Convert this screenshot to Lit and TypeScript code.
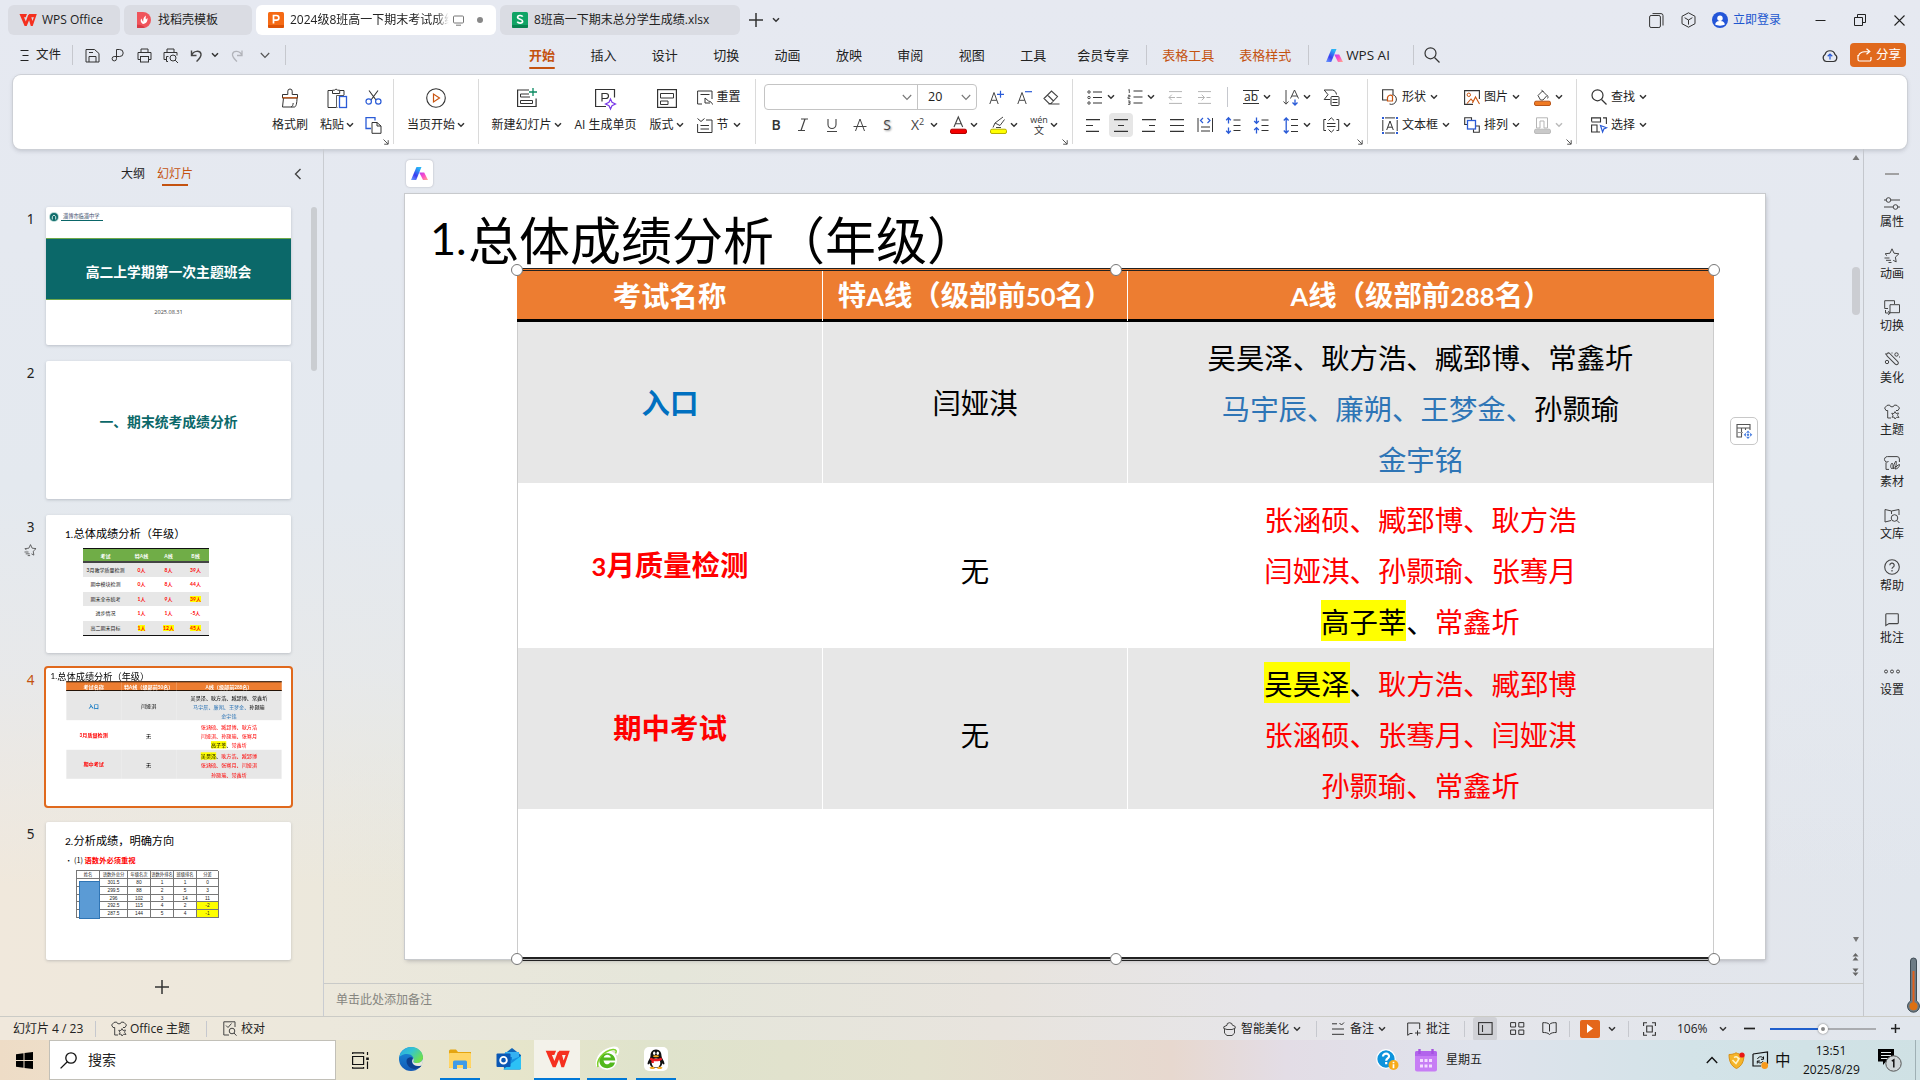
import { LitElement, html, css, svg, nothing } from "lit";
import { customElement } from "lit/decorators.js";
import { classMap } from "lit/directives/class-map.js";

const D = "#333";
const B = "#2a5bd7";
const O = "#c9540f";

/* ---------- icon set: [width, height, drawing] ---------- */
const ICONS: Record<string, [number, number, unknown]> = {
  caret: [8, 6, svg`<path d="M1 1.2 4 4.2 7 1.2" stroke=${D} stroke-width="1.5"/>`],
  caretGray: [8, 6, svg`<path d="M1 1.2 4 4.2 7 1.2" stroke="#bbb" stroke-width="1.5"/>`],
  chevDown: [10, 7, svg`<path d="M.8 1 5 5.4 9.2 1" stroke="#555" stroke-width="1.2"/>`],
  chevDownLight: [10, 7, svg`<path d="M.8 1 5 5.4 9.2 1" stroke="#777" stroke-width="1.1"/>`],
  chevLeft: [8, 12, svg`<path d="M6.5 1 1.5 6l5 5" stroke="#444" stroke-width="1.4"/>`],
  launcher: [6, 6, svg`<path d="M.5.5 5 5M5.2 1.2v4H1.2" stroke="#555"/>`],
  wps: [18, 14, svg`<path d="M.5 1H8L6.700 4.200H5L6.800 8.500 9.300 1.800h2.300L13.400 8l1.500-3.800H9.200L10.200 1H17.800L13.700 13h-1.900L10.100 7.200 7.700 13H5.600Z" fill="#f5301f"/>`],
  docer: [14, 16, svg`<path d="M0 0h6a8 8 0 0 1 0 16H0Z" fill="#f0545b"/><path d="M0 12.5c3 .6 5 .2 8 2.9L6 16H0Z" fill="#d93b45"/><path d="M6 12C3 10 3.6 7.6 4.4 6.4 5 8 5.400 9 6.300 10 6 6 7.400 4.500 9 3.500c-.4 2-.4 3.200 0 4l1.400-1.500C11 9 9.400 11.400 6 12Z" fill="#fff"/>`],
  ppt: [16, 16, svg`<rect width="16" height="16" rx="1.500" fill="#f56a14"/><path d="M0 13h16v1.500a1.500 1.500 0 0 1-1.500 1.500h-13A1.500 1.500 0 0 1 0 14.500Z" fill="#dc5206"/><path d="M5.500 11.500v-8h3a2.300 2.300 0 0 1 0 4.700h-3" stroke="#fff" stroke-width="1.700"/>`],
  xls: [16, 16, svg`<rect width="16" height="16" rx="1.500" fill="#10a465"/><path d="M0 13h16v1.500a1.500 1.500 0 0 1-1.500 1.500h-13A1.500 1.500 0 0 1 0 14.500Z" fill="#088350"/><path d="M10.700 4.600C9.800 3 5.500 3 5.600 5.400c.1 2.300 5 1.500 5 3.800 0 2.500-4.500 2.300-5.300.5" stroke="#fff" stroke-width="1.700"/>`],
  monitor: [11, 11, svg`<rect x=".5" y="1" width="10" height="7" rx="1" stroke="#777"/><path d="M3 10.200h5" stroke="#777"/>`],
  dot: [6, 6, svg`<circle cx="3" cy="3" r="3" fill="#888"/>`],
  plus: [14, 14, svg`<path d="M7 0v14M0 7h14" stroke="#333" stroke-width="1.500"/>`],
  plusSm: [9, 9, svg`<path d="M4.500 0v9M0 4.500h9" stroke="#222" stroke-width="1.500"/>`],
  minusSm: [11, 9, svg`<path d="M0 4.500h11" stroke="#222" stroke-width="1.700"/>`],
  pages: [15, 15, svg`<rect x=".6" y="2.500" width="10.800" height="12" rx="1.500" stroke=${D}/><path d="M3.500.6H12a2 2 0 0 1 2 2V12.500" stroke=${D}/>`],
  cube: [15, 16, svg`<path d="M7.500.8 14 4.300v7.400L7.500 15.200 1 11.700V4.300Z" stroke=${D}/><path d="M3.600 5.700 7.500 8v4.600M11.400 5.700 7.500 8" stroke=${D}/>`],
  avatar: [16, 16, svg`<circle cx="8" cy="8" r="8" fill="#2456d8"/><circle cx="8" cy="6.200" r="2.700" fill="#fff"/><path d="M3.200 12.600C3.600 9.600 5.500 9 8 9s4.400.6 4.800 3.600C11 14 5 14 3.200 12.600Z" fill="#fff"/>`],
  winMin: [11, 11, svg`<path d="M.5 5.500h10" stroke="#222"/>`],
  winRestore: [13, 13, svg`<path d="M.5 3.500h8v8h-8ZM3.500 3.500v-3h8v8h-3" stroke="#222"/>`],
  winClose: [11, 11, svg`<path d="M.5.5l10 10M10.500.5l-10 10" stroke="#222" stroke-width="1.100"/>`],
  burger: [9, 13, svg`<path d="M.5 1.500h8M2.500 6.500h6M.5 11.500h8" stroke="#222"/>`],
  save: [15, 15, svg`<path d="M1 14V1.500h8.500L14 5.500V14Z" stroke=${D}/><path d="M4 14V8.500h7V14M4 4.500h4" stroke=${D}/>`],
  exportPdf: [14, 14, svg`<path d="M5.500 9V1.500h3.200a3.500 3.500 0 0 1 0 7H3.200a2.200 2.200 0 1 0 2.300 2.200V9" stroke=${D}/>`],
  print: [15, 15, svg`<path d="M4 4.500V1h7v3.500M3 11.500H1v-7h13v7h-2" stroke=${D}/><rect x="3.500" y="8.500" width="8" height="5.500" stroke=${D}/>`],
  preview: [16, 15, svg`<path d="M4 4.500V1h7v3.500M5 13.500H3.500v-5h2M3 11.500H1v-7h13v3" stroke=${D}/><circle cx="10" cy="10" r="3" stroke=${D}/><path d="M12.200 12.200 15 15" stroke=${D}/>`],
  undo: [13, 13, svg`<path d="M1.500 1.500v5h5M1.700 6.200C3.500 1.500 10 1 11 5c.5 3-2 5-4.500 7.500" stroke="#444" stroke-width="1.400"/>`],
  redo: [13, 13, svg`<path d="M11 1.500v5H6M10.800 6.200C9 1.500 2.500 1 1.500 5c-.5 3 2 5 4.500 7.500" stroke="#b2b4ba" stroke-width="1.300"/>`],
  search: [16, 16, svg`<circle cx="6.500" cy="6.300" r="5.500" stroke=${D} stroke-width="1.200"/><path d="M10.500 10.500 15.500 15.500" stroke=${D} stroke-width="1.200"/>`],
  ai: [17, 13, svg`<defs><linearGradient id="a1" x1="0" y1="1" x2=".6" y2="0"><stop offset="0" stop-color="#6fa2ff"/><stop offset=".45" stop-color="#3a3cf0"/><stop offset="1" stop-color="#28b4f7"/></linearGradient><linearGradient id="a2" x1="0" y1="0" x2="1" y2="1"><stop offset="0" stop-color="#b83bf5"/><stop offset=".5" stop-color="#ff4fc3"/><stop offset="1" stop-color="#ffb08a"/></linearGradient></defs><path d="M0 13 5.500 0h5L5.200 13Z" fill="url(#a1)"/><path d="M8.200 5.500h5L17 13h-5L9.800 8.500Z" fill="url(#a2)"/>`],
  cloud: [16, 15, svg`<path d="M4.500 13.500A3.800 3.800 0 0 1 3 6.500 5.200 5.200 0 0 1 13 6.500a3.800 3.800 0 0 1-1.500 7Z" stroke=${D} stroke-width="1.200"/><path d="M8 11.500V6.200M5.700 8.200 8 6l2.300 2.200" stroke=${B} stroke-width="1.200"/>`],
  share: [15, 14, svg`<path d="M1 7v4.500A1.500 1.500 0 0 0 2.500 13h10a1.500 1.500 0 0 0 1.500-1.500V9M1.500 8C2 4.500 5 3.500 12.500 3.500M9.500.7l3.300 2.800L9.500 6.300" stroke="#fff" stroke-width="1.200"/>`],
  brush: [20, 20, svg`<path d="M7.800 6.500V3.200a2.200 2.200 0 0 1 4.400 0v3.300h5.300V10H2.500V6.500ZM3.500 10 2.500 19h12c1.500 0 2.500-4 2.500-9M11 19c1.500-.5 2-2 2.200-4" stroke=${D}/><path d="M2.500 9.800h15" stroke=${O} stroke-width="1.200"/>`],
  paste: [20, 20, svg`<path d="M5 2.500H1v17h8M13 2.500h4V7" stroke=${D}/><path d="M5.500 5.500V2.200h2.200a1.500 1.500 0 0 1 2.800 0h2.200v3.300Z" stroke=${D}/><rect x="12.500" y="8.500" width="7" height="11" stroke=${B} stroke-width="1.300"/><path d="M10.500 19.500h-1V7.500H17" stroke=${D} stroke-width=".8"/>`],
  cut: [17, 15, svg`<path d="M4 .5 11 10M13 .5 6 10" stroke=${D} stroke-width="1.100"/><circle cx="3.700" cy="11.500" r="2.700" stroke=${B} stroke-width="1.200"/><circle cx="13.300" cy="11.500" r="2.700" stroke=${B} stroke-width="1.200"/>`],
  copy: [17, 17, svg`<path d="M6 11.500H1V.7h9V3.500" stroke=${B} stroke-width="1.300"/><path d="M7 5.500h5l4 3.500v7.300H7ZM12 5.500V9h4" stroke=${D}/>`],
  playRound: [20, 20, svg`<circle cx="10" cy="10" r="9.300" stroke=${D} stroke-width="1.100"/><path d="M7.500 6v8l6-4Z" stroke=${O} stroke-width="1.200"/>`],
  newSlide: [20, 20, svg`<path d="M12 2H.6V18.500h18.500V10.500" stroke=${D} stroke-width="1.200"/><path d="M12 6H3.500v3H13M3.500 12.500h12v3h-12Z" stroke=${D}/><path d="M16 0v8M12 4h8" stroke="#0b8a62" stroke-width="1.300"/>`],
  aiSlide: [21, 21, svg`<path d="M11 18.500H.6V1.500H19.500V9.500" stroke=${D} stroke-width="1.200"/><path d="M7 13.500V5.500h4a2.500 2.500 0 0 1 0 5H7" stroke=${D} stroke-width="1.200"/><path d="M15.500 11 17 14.300l3.500 1.700-3.500 1.700L15.500 21 14 17.700 10.500 16 14 14.300Z" stroke="#7a3be8" stroke-width="1.200"/>`],
  layout: [20, 19, svg`<rect x=".6" y=".6" width="18.800" height="17.800" stroke=${D} stroke-width="1.200"/><path d="M3.500 4.500h13v4.500h-13ZM3.500 12h7.500v3.500H3.500Z" stroke=${D}/>`],
  reset: [16, 15, svg`<path d="M5 14H.6V1H15v8M3.500 4.500h9" stroke=${D}/><path d="M8 8v5h5M8 8l3.500 3c2 .5 3.500 1.500 4 3.500" stroke=${D}/>`],
  section: [16, 15, svg`<path d="M.5.5 4 3.500 7.500.5M9 2h6v12.500H.6V6M3.500 7.500H12M3.500 11H12" stroke=${D}/>`],
  aPlus: [15, 15, svg`<path d="M.8 14 5 2.500 9.200 14M2.300 10.300h5.400" stroke="#444"/><path d="M11.500.8v7M8 4.300h7" stroke=${B} stroke-width="1.200"/>`],
  aMinus: [15, 15, svg`<path d="M.8 14 5 2.500 9.200 14M2.300 10.300h5.400" stroke="#444"/><path d="M8 1.700h7" stroke=${B} stroke-width="1.200"/>`],
  eraser: [17, 15, svg`<path d="M1 8.500 8.500 1 14.500 6.500 8 13.500H6ZM4.500 5l6 6M5.500 14h11" stroke="#444" stroke-width="1.100"/>`],
  underline: [16, 16, svg`<path d="M4 2v5.500a4 4 0 0 0 8 0V2M3 14.500h10" stroke="#444" stroke-width="1.100"/>`],
  italic: [16, 16, svg`<path d="M6 2h7M3 13.500h7M10 2 6 13.500" stroke="#444" stroke-width="1.200"/>`],
  strikeA: [16, 16, svg`<path d="M3.500 14 8 2l4.500 12M1.500 9.500h13" stroke="#444"/>`],
  fontColor: [17, 18, svg`<path d="M4 11 8.300 1 12.700 11M5.500 7.700h5.700" stroke="#444" stroke-width="1.100"/><rect x=".5" y="13.200" width="16" height="4.300" rx="1.500" fill="#f40000" stroke="#b00000"/>`],
  marker: [17, 18, svg`<path d="M3 11.500 5 7 13 1M5 7l5 2.500L14.500 3.500M6 11.500h5" stroke="#444"/><rect x=".5" y="13.200" width="16" height="4.300" rx="1.500" fill="#ff0" stroke="#b8b000"/>`],
  bullets: [16, 15, svg`<path d="M6 2h9M6 7.500h9M6 13h9" stroke=${D} stroke-width="1.100"/><circle cx="2" cy="2" r="1.200" stroke="#444"/><circle cx="2" cy="7.500" r="1.200" stroke="#444"/><circle cx="2" cy="13" r="1.200" stroke="#444"/>`],
  numbers: [16, 16, svg`<path d="M6.500 2h9M6.500 8h9M6.500 14h9" stroke=${D} stroke-width="1.100"/><path d="M1.300 1l1-.5V4M1 6.300h2v1.600H1v1.700h2.200M1 12h2v1.600H1.500M3 13.600v1.700H1" stroke="#444" stroke-width=".9"/>`],
  outdent: [15, 13, svg`<path d="M1 .6h13M1 12.400h13M8.500 6.500h5" stroke="#b5b5b5"/><path d="M7 6.500H1M3.800 3.700 1 6.500l2.800 2.800" stroke="#b5b5b5"/>`],
  indent: [15, 13, svg`<path d="M1 .6h13M1 12.400h13M9.500 6.500h4" stroke="#b5b5b5"/><path d="M1 6.500h6.500M4.700 3.700l2.800 2.800-2.800 2.800" stroke="#b5b5b5"/>`],
  textDir: [17, 17, svg`<path d="M3 1v14M.5 12.500 3 15.200l2.500-2.700M7.500 9.500 11.500 1l4 8.500M9 7h5" stroke="#444"/><path d="M12 10.500v5.500M9.500 13.500 12 16l2.500-2.500" stroke=${B} stroke-width="1.300"/>`],
  convert: [17, 17, svg`<path d="M7 10.500H1.200L5 5.700 1.200 1H9.500c2.500.6 3.500 2 4 4.500" stroke=${D}/><rect x="8" y="7.500" width="8" height="9" rx="1" stroke=${D}/><path d="M9.500 10.500h5M9.500 13.500h5" stroke=${D}/>`],
  alL: [15, 13, svg`<path d="M1 .6h14M1 6.500h7M1 12.400h13" stroke=${D} stroke-width="1.200"/>`],
  alC: [14, 13, svg`<path d="M0 .6h14M4 6.500h6M0 12.400h14" stroke=${D} stroke-width="1.200"/>`],
  alR: [15, 13, svg`<path d="M1 .6h14M8 6.500h6M1 12.400h13" stroke=${D} stroke-width="1.200"/>`],
  alJ: [15, 13, svg`<path d="M1 .6h14M1 6.500h14M1 12.400h14" stroke=${D} stroke-width="1.200"/>`],
  dist: [17, 16, svg`<path d="M1 1v14M15.500 1v14M4 10h9M4 14h9" stroke=${D}/><path d="M6 1 3.500 3.500 6 6M10.500 1 13 3.500 10.500 6" stroke=${B} stroke-width="1.200"/>`],
  lineInc: [16, 17, svg`<path d="M8.500 3h7M8.500 8.500h7M8.500 13.500h7" stroke=${D} stroke-width="1.100"/><path d="M3.500 6.500V1M1.200 3.200 3.500.8l2.300 2.400M3.500 10.500V16M1.200 13.800l2.300 2.400 2.300-2.400" stroke=${B} stroke-width="1.300"/>`],
  lineDec: [16, 17, svg`<path d="M8.500 3h7M8.500 8.500h7M8.500 13.500h7" stroke=${D} stroke-width="1.100"/><path d="M3.500.5V6M1.200 4l2.300 2.400L5.800 4M3.500 16.500V11M1.200 13l2.300-2.400L5.800 13" stroke=${B} stroke-width="1.300"/>`],
  lineSp: [16, 17, svg`<path d="M8 2.500h7M8 8.500h7M8 14.500h7" stroke=${D} stroke-width="1.100"/><path d="M3.200 1.500v14M.8 3.500 3.200 1l2.400 2.500M.8 13.500 3.200 16l2.400-2.500" stroke=${B} stroke-width="1.300"/>`],
  vAlign: [17, 16, svg`<path d="M3 2.500H.8v11H3M13.500 2.500h2.200v11h-2.200M4 6.500h8.500M4 9.500h8.500" stroke=${D}/><path d="M5.500 3.500l2.800-2.700 2.800 2.700M5.500 12.500l2.800 2.700 2.800-2.700" stroke=${D}/>`],
  shapes: [16, 17, svg`<path d="M5 11H.6V.8H11V5.500" stroke=${D} stroke-width="1.100"/><path d="M10.500 5.500a5 5 0 1 1-3 9.500" stroke=${D}/><path d="M5.500 12V8.500a3 3 0 0 1 5-1.500V12Z" stroke=${O} stroke-width="1.200"/>`],
  textbox: [16, 17, svg`<path d="M3 .9h10M3 16h10M.8 3v11M15.200 3v11" stroke=${D}/><path d="M4.700 13 8 4l3.300 9M6 10.200h4" stroke=${D}/><path d="M0 0h2v2H0ZM14 0h2v2h-2ZM0 15h2v2H0ZM14 15h2v2h-2Z" fill=${B}/>`],
  picture: [16, 15, svg`<path d="M9 14.400H.6V.6H15.400V9" stroke=${D} stroke-width="1.100"/><circle cx="4.800" cy="4.800" r="1.700" stroke=${O}/><path d="M3 13.500 7 9l2 2.300M8.500 13 11.500 7l4 7" stroke=${O} stroke-width="1.100"/>`],
  arrange: [16, 16, svg`<path d="M3 7.500H.7V.7H7.500V3" stroke=${D} stroke-width="1.100"/><rect x="3.500" y="3.500" width="8" height="8.500" stroke=${B} stroke-width="1.300"/><path d="M9.500 12.500v2.800h5.800V9H12" stroke=${D} stroke-width="1.100"/>`],
  fill: [17, 17, svg`<path d="M4 6.500 8.500 2l4.500 4.500-4 4.500H6.500ZM7.500.8 9.500 3M13.500 6.500c.8 1.500.6 2.500-.2 3" stroke="#444"/><rect x=".5" y="12.200" width="16" height="4.300" rx="1.500" fill="#ef7a22" stroke="#b8551a"/>`],
  outline: [17, 17, svg`<path d="M2.500 11V.8h11V11H10V4H6V11Z" stroke="#b5b5b5"/><rect x=".5" y="12.200" width="16" height="4.300" rx="1.500" fill="#c9c9c9" stroke="#bbb"/>`],
  select: [16, 16, svg`<path d="M.6 4.500V.9H9.500V5H.6M12 .9h3.400V7M.6 8H6v7H.6ZM6 15h3" stroke=${D} stroke-width="1.100"/><path d="M9.500 8.500l6 2.300-2.700 1.200-1.200 2.900Z" stroke=${B} stroke-width="1.200"/>`],
  star: [16, 15, svg`<path d="M8 .8 10 5.200l4.900.6-3.500 3.300.8 4.800-3-1.600M8 .8 6 5.200 1.100 5.800 3 7.700M.5 10h5M2 12.300h5M4.500 14.500h3" stroke="#444"/>`],
  props: [16, 13, svg`<circle cx="4.500" cy="3" r="2.300" stroke="#444"/><circle cx="11.500" cy="10" r="2.300" stroke="#444"/><path d="M7 3h9M0 10h9M0 3h2M14 10h2" stroke="#444"/>`],
  swap: [16, 15, svg`<path d="M4 8.500H.7V.7h9.800V4M6 4.700h9.500v8H6Z" stroke="#444"/><path d="M1.500 10v3h4.500M4.200 11 6.200 13l-2 2" stroke="#444"/>`],
  beauty: [16, 14, svg`<rect x="1" y="5" width="15" height="3.600" rx="1.800" transform="rotate(45 8.500 6.800)" stroke="#444"/><circle cx="12.500" cy="2.500" r="1.700" stroke="#444"/><circle cx="3" cy="10" r="1.700" stroke="#444"/><path d="M1 2h2M15 5h1M8 .5v1" stroke="#444"/>`],
  shirt: [16, 15, svg`<path d="M5.500 1a2.600 2.600 0 0 0 5 0l2.500.4L15.500 4 14 6.500H12M5.500 1 3 1.400.6 4 2 6.500h1.700V14H7" stroke="#444"/><path d="M11 7.500l1 2 2.500-.5-1 2.200 1.500 2.300-2.500-.2L11 15l-1-2-2 .3 1-2-1.300-2 2.300.2Z" stroke="#444" stroke-width=".9"/>`],
  material: [16, 14, svg`<path d="M15.400 6V3a2.400 2.400 0 0 0-2.400-2.400H3.500A2.800 2.800 0 0 0 1 5c1 1.500 3 1.500 3.500 0M2 6.500V13.400H5" stroke="#444"/><path d="M8 13c-2-2-1.500-4 0-6 1.500 2 1.500 4 0 6ZM9.500 13c0-4 1-6 2.500-8 .8 3.500 0 6-2.500 8ZM11 13c1-2.500 2.500-4 4.500-4.500C15.500 11 13.500 13 11 13Z" stroke="#444"/>`],
  library: [16, 15, svg`<path d="M7 12.500 1 14V1.500L7.500 3 15 1.500V7M7.500 3v3" stroke="#444"/><circle cx="10.500" cy="10" r="3.300" stroke="#444"/><path d="M13 12.500 15.500 15" stroke="#444"/>`],
  help: [16, 16, svg`<circle cx="8" cy="8" r="7.300" stroke="#444" stroke-width="1.100"/><path d="M5.800 6.300a2.200 2.200 0 1 1 3.200 1.900c-.7.400-1 .8-1 1.600M8 11v1.400" stroke="#444" stroke-width="1.200"/>`],
  comment: [14, 13, svg`<path d="M1.500.7h11a.8.8 0 0 1 .8.8v8.300a.8.8 0 0 1-.8.800H4L.8 12.600V1.500a.8.800 0 0 1 .7-.8Z" stroke="#444" stroke-width="1.100"/>`],
  dots: [16, 5, svg`<circle cx="2" cy="2.500" r="1.500" stroke="#444"/><circle cx="8" cy="2.500" r="1.500" stroke="#444"/><circle cx="14" cy="2.500" r="1.500" stroke="#444"/>`],
  dash: [14, 2, svg`<path d="M0 1h14" stroke="#999" stroke-width="1.800"/>`],
  check: [14, 15, svg`<path d="M6 14H.8V.8H12V6M3 4.500l2 2 3.500-4" stroke="#444"/><circle cx="9" cy="10" r="2.800" stroke="#444"/><path d="M11 12l2.500 2.700" stroke="#444"/>`],
  smart: [13, 14, svg`<path d="M1.500 6.500v4.700l2.500 2.300h5l2.500-2.300V6.500M.8 4.800 4 3.300 4.300 1.500 6.500.7l2.300.8.2 1.300L12.200 4.500v1.800L9 7.500H4L.8 6.500Z" stroke="#444"/>`],
  notes: [13, 13, svg`<path d="M0 1.800h5M0 7h12M0 12.300h12M7.500 1l2 2 2.500-2.500" stroke=${D}/>`],
  addNote: [14, 14, svg`<path d="M5.500 11.500H3L.7 13.300V1h12v6M10.500 8.500v5M8 11h5.500" stroke=${D}/>`],
  viewNormal: [15, 13, svg`<rect x=".6" y=".6" width="13.500" height="11.800" stroke=${D} stroke-width="1.100"/><path d="M4.500 3v7" stroke=${D} stroke-width="1.100"/>`],
  viewGrid: [15, 13, svg`<path d="M.6.6h5v4.400h-5ZM8.800.6h5v4.400h-5ZM.6 8h5v4.400h-5ZM8.800 8h5v4.400h-5Z" stroke=${D}/>`],
  viewBook: [15, 13, svg`<path d="M7.500 2.500C6 .6 3 .6.8.7V10.500c2 0 5 0 6.700 2 1.700-2 4.700-2 6.700-2V.7C12 .6 9 .6 7.500 2.500v7" stroke=${D}/>`],
  play: [7, 9, svg`<path d="M0 0v9l6-4.500Z" fill="#fff"/>`],
  fit: [13, 14, svg`<path d="M.6 4V.7H4M9 .7h3.400V4M12.400 10v3.300H9M4 13.300H.6V10M3.700 4h5.600v6H3.700Z" stroke=${D} stroke-width="1.100"/>`],
  triUp: [8, 6, svg`<path d="M4 0 7.500 5H.5Z" fill="#777"/>`],
  triDown: [6, 5, svg`<path d="M3 5 6 0H0Z" fill="#777"/>`],
  dblUp: [7, 8, svg`<path d="M3.500 0 6.500 3.500h-6ZM3.500 4 6.500 7.500h-6Z" fill="#666"/>`],
  dblDown: [7, 8, svg`<path d="M3.500 8 6.500 4.500h-6ZM3.500 4 6.500.5h-6Z" fill="#666"/>`],
  tableMove: [17, 16, svg`<path d="M6 14H1V1.500H14V7M1 5h13M5.500 5v9M9.500 5v2" stroke="#555" stroke-width="1.100"/><path d="M1 9.500h6" stroke="#999"/><path d="M12 7.500l2 2.200h-4ZM12 16l2-2.200h-4ZM7.700 11.700l2.200-2v4ZM16.300 11.700l-2.200-2v4Z" fill="#4a7fe0"/><circle cx="12" cy="11.700" r="1.200" fill="#4a7fe0"/>`],
  windows: [17, 17, svg`<path d="M0 2.300 7.500 1.200V8H0ZM8.500 1 17 0V8H8.500ZM0 9h7.500v6.800L0 14.700ZM8.500 9H17v8L8.500 16Z" fill="#000"/>`],
  searchTb: [17, 17, svg`<circle cx="11" cy="6" r="5.200" stroke="#111" stroke-width="1.300"/><path d="M7.300 9.700.6 16.400" stroke="#111" stroke-width="1.300"/>`],
  taskview: [17, 17, svg`<path d="M.6 2V.8h11V2M.6 15v1.200h11V15M.6 4.500h11v8H.6ZM15.500 0v3M15.500 9.500V17" stroke="#111" stroke-width="1.200"/><path d="M14.200 5.500h2.600V8h-2.600Z" fill="#111"/>`],
  edge: [26, 26, svg`<defs><linearGradient id="e1" x1="0" y1="0" x2="1" y2=".6"><stop offset="0" stop-color="#2ba7e8"/><stop offset=".5" stop-color="#34c4cf"/><stop offset="1" stop-color="#6ee04c"/></linearGradient><linearGradient id="e2" x1="0" y1="0" x2="0" y2="1"><stop offset="0" stop-color="#1b8fdc"/><stop offset="1" stop-color="#1259b5"/></linearGradient></defs><circle cx="13" cy="13" r="12" fill="url(#e2)"/><path d="M1.200 11.500C2.500 4.500 8 1 13 1c7 0 12 5 12 10.500 0 3.500-3 5.500-6 5.500-4 0-4-1.500-3.400-2.500 1-3-2-6.500-6.600-6.500-4 0-7 2-7.800 3.500Z" fill="url(#e1)"/><path d="M8.500 15c0 5 5 9.500 11 7.500 2-.7 3.300-1.800 4-3-4 1.500-8.500.5-9.500-3-.5-2 1-3 1-4-1-2-6.500-1.500-6.500 2.500Z" fill="#0d3f8e"/><path d="M14.200 16c-.4-2 1-2.800.8-4.200.6.900.9 2 .6 3-.6 1-.6 2.300 3.400 2.300 3 0 5.500-1.800 6-4.300.4 2.200-.2 4.500-1.500 6.600-4 1.500-8.500.4-9.300-3.400Z" fill="#e9e7dc"/>`],
  folder: [24, 22, svg`<path d="M1 3a1.500 1.500 0 0 1 1.500-1.500H8l2 2.500H23V20H1Z" fill="#e5a50f"/><rect x="1" y="5" width="22" height="15" rx="1" fill="#ffd566"/><path d="M5 21v-7a1.500 1.500 0 0 1 1.500-1.500h11A1.500 1.500 0 0 1 19 14v7h-4v-4H9v4Z" fill="#3f9be8"/>`],
  outlook: [26, 24, svg`<path d="M7 8 16 1l9 7v13a1.500 1.500 0 0 1-1.500 1.500H8Z" fill="#1066b8"/><path d="M9 5h14v10H9Z" fill="#35b1f2"/><path d="M9 10h7v7H9Z" fill="#0f7fd4"/><path d="M25 9v12.500L10 15Z" fill="#1490df"/><path d="M7 22.500 25 9v12a1.500 1.500 0 0 1-1.500 1.500Z" fill="#2cc1f5"/><rect x=".5" y="6.500" width="14" height="13.500" rx="1" fill="#0a57b4"/><circle cx="7.500" cy="13.200" r="3.300" stroke="#fff" stroke-width="1.900"/>`],
  ieGreen: [24, 24, svg`<path d="M3 19C1 12 8 3 19 1.500c4-.3 4 3 2 6" stroke="#fff" stroke-width="4"/><circle cx="12" cy="13" r="10" fill="#fff"/><path d="M20 15.500C18.500 23 5 23.500 4.300 14 4 4 19.700 3.500 20.300 13.500H8.500c1 5 5.500 4.500 6.500 2ZM8.700 10.500h7.200c-.8-3.600-6.200-3.700-7.200 0Z" fill="#52b81c" fill-rule="evenodd"/><path d="M3 20C1 13 8 4 18 2.500c4-.3 3.500 2.500 2.500 4" stroke="#7fd02c" stroke-width="1.500"/>`],
  qq: [24, 24, svg`<rect width="24" height="24" rx="5" fill="#fff"/><path d="M12 2.500c4 0 5.500 3 5.500 6.500 0 2 3 5 3 8-.8 1-1.500.3-2.200-.7C18 19.500 15.500 21 12 21s-6-1.500-6.300-4.700c-.7 1-1.400 1.700-2.200.7 0-3 3-6 3-8C6.500 5.500 8 2.500 12 2.500Z" fill="#111"/><ellipse cx="12" cy="16" rx="4.300" ry="4.500" fill="#fff"/><path d="M6.500 10.500c3 1.800 8 1.800 11 0l.7 2.200c-3.500 2-9 2-12.400 0Z" fill="#ec1c24"/><path d="M7.500 12.500h2.300V16H7.500Z" fill="#ec1c24"/><ellipse cx="10.200" cy="6.300" rx="1.200" ry="1.700" fill="#fff"/><ellipse cx="13.800" cy="6.300" rx="1.200" ry="1.700" fill="#fff"/><ellipse cx="12" cy="9.300" rx="3" ry="1" fill="#f7a81b"/><path d="M5.500 20.500c2-1.200 4.500-1 5.500.5-.5 1.500-5 1.500-5.500-.5ZM18.500 20.500c-2-1.200-4.500-1-5.500.5.5 1.500 5 1.500 5.500-.5Z" fill="#f7a81b"/>`],
  helpTray: [23, 22, svg`<circle cx="10" cy="10" r="9.300" fill="#0d93dc" stroke="#fff" stroke-width="1.300"/><path d="M7 7.500C7 3.500 13.500 4 13 7.500c-.2 2-2.800 2-2.800 4.200M10.200 13v2.300" stroke="#fff" stroke-width="2.200"/><circle cx="17.500" cy="16" r="5" fill="#f7ab1a"/><path d="M17.500 12.700v1.500M17.500 15.200v4" stroke="#fff" stroke-width="1.700"/>`],
  calendar: [24, 24, svg`<rect x="1" y="3" width="22" height="20.500" rx="2" fill="#c77df5"/><path d="M1 5a2 2 0 0 1 2-2h18a2 2 0 0 1 2 2v3H1Z" fill="#b264ec"/><path d="M5.500 1v5M18.500 1v5" stroke="#a552e0" stroke-width="2.400"/><path d="M6 11h3v3H6ZM10.500 11h3v3h-3ZM15 11h3v3h-3ZM6 16.500h3v3H6ZM10.500 16.500h3v3h-3ZM15 16.500h3v3h-3Z" fill="#f3dcff"/>`],
  trayUp: [12, 8, svg`<path d="M.8 7 6 1.500 11.200 7" stroke="#111" stroke-width="1.400"/>`],
  shield: [17, 17, svg`<path d="M1 2.500C4 2.500 6 2 8 .8c2.500 1.200 4.500 1.700 8 1.700C16 9 14 14 8.500 16.500 3 14 1 9 1 2.500Z" fill="#f5b52a" stroke="#d8921a"/><path d="M4.500 8 8 11.500 11.500 6M6 5.500c3-2 6 1 3.500 4" stroke="#fff4c8" stroke-width="1.500"/><circle cx="14" cy="3" r="2.600" fill="#e81616"/>`],
  ime: [17, 18, svg`<path d="M1 3 15.500 1v12M1 3v12h8" stroke="#111" stroke-width="1.200"/><path d="M5.500 8c1-3 5.500-3 6 0M11.500 5.500V8.300H9M11 10c-1 2.500-4.500 2.500-5.500 0M5.300 12.500V10H8" stroke="#111"/><circle cx="12.700" cy="14.500" r="3.400" fill="#f79a1c"/>`],
  notif: [24, 23, svg`<path d="M0 0h16v12.500H8L5 16v-3.500H0Z" fill="#000"/><path d="M3 3.500h10M3 6.500h10M3 9.500h7" stroke="#e6eef0" stroke-width="1.200"/><circle cx="15.500" cy="14.500" r="7.700" fill="#cfd6d8" stroke="#555"/><path d="M13.800 12.200l2-1.300V18.500" stroke="#111" stroke-width="1.500"/>`],
  thermo: [13, 56, svg`<path d="M3.500 44V4a3 3 0 0 1 6 0V44a6 6 0 1 1-6 0Z" fill="#6d7b85" stroke="#3f4c55"/><path d="M6.500 14v36" stroke="#e2601c" stroke-width="2"/><circle cx="6.500" cy="49.300" r="4" fill="#dd7012"/>`],
  school: [10, 10, svg`<circle cx="5" cy="5" r="5" fill="#b8d9d6"/><circle cx="5" cy="5" r="4" fill="#0d6b6a"/><path d="M3.300 7.500V4.500L5 3l1.700 1.500v3" stroke="#cfe8e4"/>`],
};

const ic = (name: string, cls = "") => {
  const [w, h, body] = ICONS[name];
  return html`<svg class="ic ${cls}" width=${w} height=${h} viewBox="0 0 ${w} ${h}" fill="none">${body}</svg>`;
};

const big = (icon: string, label: string, drop = true) => html`
  <div class="big"><div class="cell">${ic(icon)}</div><div class="cell lab">${label}${drop ? ic("caret") : nothing}</div></div>`;

const btn = (icon: string, label: string, drop = true) => html`
  <div class="btn">${ic(icon)}${label ? html`<span>${label}</span>` : nothing}${drop ? ic("caret") : nothing}</div>`;

type Run = [string, string];
const NAMES: Run[][][] = [
  [
    [["k", "吴昊泽、耿方浩、臧郅博、常鑫圻"]],
    [["b", "马宇辰、廉朔、王梦金、"], ["k", "孙颢瑜"]],
    [["b", "金宇铭"]],
  ],
  [
    [["r", "张涵硕、臧郅博、耿方浩"]],
    [["r", "闫娅淇、孙颢瑜、张骞月"]],
    [["k mark", "高子莘"], ["k", "、"], ["r", "常鑫圻"]],
  ],
  [
    [["k mark", "吴昊泽"], ["k", "、"], ["r", "耿方浩、臧郅博"]],
    [["r", "张涵硕、张骞月、闫娅淇"]],
    [["r", "孙颢瑜、常鑫圻"]],
  ],
];

const SIDE: [string, string][] = [
  ["props", "属性"], ["star", "动画"], ["swap", "切换"], ["beauty", "美化"], ["shirt", "主题"],
  ["material", "素材"], ["library", "文库"], ["help", "帮助"], ["comment", "批注"], ["dots", "设置"],
];

const GOALS = [
  ["3月教学质量检测", "0人", "8人", "39人"],
  ["期中模块检测", "0人", "8人", "44人"],
  ["期末全市统考", "1人", "9人", "39人*"],
  ["进步情况", "1人", "1人", "-5人"],
  ["高二期末目标", "1人*", "12人*", "45人*"],
];

const SCORES = [
  ["", "301.5", "80", "1", "1", "0"],
  ["", "299.5", "88", "2", "5", "3"],
  ["", "296", "102", "3", "14", "11"],
  ["", "292.5", "115", "4", "2", "-2"],
  ["", "287.5", "144", "5", "4", "-1"],
];

@customElement("app-root")
export class AppRoot extends LitElement {
  static styles = css`
    :host { display: block; width: 1920px; height: 1080px; overflow: hidden; color: #222;
      font: 12px/16px "Open Sans", "Noto Sans CJK SC", sans-serif; white-space: nowrap; }
    * { box-sizing: border-box; }
    .ic { display: block; flex: none; overflow: visible; }
    .app { display: flex; flex-direction: column; height: 1080px;
      background: linear-gradient(180deg, #e6e9f1 0, #e4e9ef 45%, rgba(229, 233, 239, .75) 62%, rgba(230, 233, 236, 0) 82%),
        linear-gradient(90deg, #f0e8dc 0, #ece8dc 17%, #e5e6da 35%, #e8e4de 52%, #e6e5e9 66%, #e1e6ed 100%); }

    /* title bar */
    .tabs { display: flex; height: 37px; padding: 5px 0 0 8px; align-items: flex-start; }
    .tab { display: flex; align-items: center; height: 30px; border-radius: 6px; background: #dadce3; padding-left: 13px; margin-right: 4px; }
    .tab.t1 { width: 112px; padding-left: 11px; gap: 5px; }
    .tab.t2 { width: 128px; gap: 7px; }
    .tab.t3 { width: 240px; background: #fff; padding-left: 12px; }
    .tab.t4 { width: 240px; gap: 6px; padding-left: 12px; margin-right: 9px; }
    .docname { width: 159px; margin: 0 4px 0 6px; overflow: hidden; -webkit-mask-image: linear-gradient(90deg, #000 92%, transparent); mask-image: linear-gradient(90deg, #000 92%, transparent); }
    .tab .dotgap { margin-left: 13px; }
    .newtab { display: flex; align-items: center; gap: 9px; height: 30px; }
    .win { display: grid; height: 30px; align-items: center; margin-left: auto; width: 271px;
      grid-template-columns: 32px 31px 21px 82px 39px 40px 26px; }
    .login { color: #1d57cf; }

    /* menu row */
    .menu { display: flex; height: 38px; align-items: center; padding: 0 14px 2px 20px; font-size: 13px; }
    .quick { display: grid; align-items: center; width: 509px; grid-template-columns: 16px 36px 13px 26px 26px 26px 27px 21px 20px 29px 25px 10px; }
    .quick span { font-size: 12.500px; }
    .vs { width: 1px; height: 20px; background: #c6c8ce; }
    .menus { display: grid; align-items: center; grid-template-columns: repeat(8, 61.4px) 57px 69px 16px 77px 69px 18px 20px 67px 11px 20px; }
    .m { justify-self: start; }
    .m.hot { color: #c4520f; }
    .m.on { color: #c4520f; font-weight: 700; position: relative; }
    .m.on::after { content: ""; position: absolute; left: 0; right: 0; top: 20px; height: 2px; border-radius: 1px; background: #c4520f; }
    .wpsai { font-size: 13.500px; }
    .mright { display: flex; align-items: center; gap: 12px; margin-left: auto; }
    .share { display: flex; align-items: center; gap: 4px; width: 56px; height: 24px; padding-left: 7px; border-radius: 4px; background: #e0691d; color: #fff; font-size: 12.500px; }

    /* ribbon */
    .ribbon { display: flex; flex: none; margin: 0 13px; height: 74px; padding: 4px 0 5px; background: #fff; border-radius: 8px;
      box-shadow: 0 0 0 1px #cdd0d6, 0 2px 4px rgba(80, 85, 100, .25); }
    .g { display: flex; position: relative; height: 65px; padding-top: 4px; border-right: 1px solid #dadada; }
    .g.last { border: 0; }
    .g > .launch { position: absolute; right: 4px; bottom: -1px; }
    .g1 { width: 381px; padding-left: 259px; }
    .g1 .big + .big { margin-left: 12px; }
    .g1 .two { margin-left: 11px; }
    .g2 { width: 85px; padding-left: 13px; }
    .g3 { width: 277px; padding-left: 12.500px; gap: 13px; }
    .g4 { width: 317px; flex-direction: column; }
    .g5 { width: 295px; flex-direction: column; }
    .g6 { width: 209px; flex-direction: column; padding-left: 14px; }
    .g7 { padding-left: 14px; flex-direction: column; }
    .cell { display: flex; height: 28px; align-items: center; justify-content: center; }
    .big .cell:first-child { height: 30px; }
    .big .lab { gap: 2px; height: 24px; }
    .two { display: flex; flex-direction: column; }
    .btn { display: flex; align-items: center; height: 28px; gap: 4px; }
    .row { display: grid; height: 28px; align-items: center; }
    .r41 { padding-left: 8px; grid-template-columns: 225px 28px 26px 20px; }
    .r42 { padding-left: 12px; grid-template-columns: 27px 29px 28px 27px 32px 19px 20px 20px 20px 20px 20px 20px 8px; }
    .r51 { padding-left: 14px; grid-template-columns: 20px 20px 20px 21px 29px 30px 16px 20px 20px 20px 20px 17px; }
    .r52 { padding-left: 12px; grid-template-columns: 24px 32px 28px 28px 28px 28px 30px 20px 20px 20px 8px; }
    .r6 { grid-template-columns: 82px 70px 30px; }
    .combo { display: grid; grid-template-columns: 152px 1fr; width: 213px; height: 26px; border: 1px solid #c4c4c4; border-radius: 4px; }
    .combo > div { display: flex; align-items: center; justify-content: space-between; padding: 0 5px 0 10px; font-size: 12.500px; }
    .combo > div + div { border-left: 1px solid #c4c4c4; }
    .fmt { width: 16px; text-align: center; font-size: 14px; color: #444; }
    .fmt.bold { font-weight: 600; color: #333; }
    .fmt.sh { font-weight: 400; text-shadow: 1px 1px 2px #888; }
    .fmt.sup { display: flex; font-size: 14px; width: 18px; line-height: 16px; }
    .sup small { font-size: 9px; line-height: 9px; }
    .ab { width: 16px; border-top: 1px solid #333; border-bottom: 1px solid #333; line-height: 11px; height: 14px; text-align: center; font-size: 12px; }
    .wen { display: flex; flex-direction: column; align-items: center; width: 18px; font-size: 9px; line-height: 9px; color: #333; }
    .wen b { font: 400 10px/11px "Noto Sans CJK SC"; }
    .onbtn { display: flex; width: 24px; height: 24px; border-radius: 4px; background: #e6e6e6; align-items: center; justify-content: center; }

    /* work area */
    .work { display: flex; flex: none; height: 867px; }
    .nav { width: 324px; border-right: 1px solid #c9ccd1; display: flex; flex-direction: column; }
    .navhead { display: flex; height: 58px; align-items: flex-start; padding: 17px 0 0 121px; }
    .navhead .sel { position: relative; color: #c4520f; margin: 0 101px 0 12px; }
    .navhead .sel::after { content: ""; position: absolute; left: 5px; right: 5px; top: 18px; height: 2px; background: #c4520f; }
    .navhead .ic { margin-top: 2px; }
    .navbody { display: flex; height: 773px; }
    .film { display: flex; flex-direction: column; gap: 16px; width: 311px; }
    .frow { display: grid; grid-template-columns: 46px 245px; height: 137.800px; }
    .num { display: flex; flex-direction: column; align-items: center; gap: 9px; padding: 4px 0 0 15px; font-size: 13.500px; font-family: "Noto Sans", sans-serif; }
    .num.cur { color: #c4520f; }
    .num .ic { width: 13px; height: 12px; }
    .th { width: 245px; height: 138px; background: #fff; border-radius: 2px; overflow: hidden; box-shadow: 0 1px 3px rgba(90, 95, 110, .3); }
    .th.cur { outline: 2px solid #e0691d; outline-offset: 0; box-shadow: none; }
    .thumbbar { width: 6px; height: 164px; border-radius: 3px; background: #cacdd1; }
    .addslide { display: flex; justify-content: center; padding: 0; }

    .school { display: flex; align-items: center; height: 31px; padding: 0 0 11px 3px; gap: 2px; }
    .school span { font-size: 5.200px; line-height: 7px; color: #346; border-bottom: 1px solid #0a6668; width: 42px; padding-left: 2px; }
    .band { height: 62px; display: flex; align-items: center; justify-content: center; padding-top: 3px; background: #0b6869; border: solid #6fa94a; border-width: 1px 0; color: #fff; font: 700 13.800px/20px "Noto Sans CJK SC"; }
    .date { text-align: center; font-size: 5.600px; line-height: 8px; padding-top: 8px; color: #444; }
    .sect { text-align: center; padding-top: 50px; font: 700 13.800px/20px "Noto Sans CJK SC"; color: #0b6869; }
    .t3title { padding: 10px 0 0 19px; font: 11.200px/17px "Noto Sans CJK SC"; color: #000; }
    .t3title .lat { display: inline-block; width: 8.500px; }
    .goals { margin: 5px 0 0 37px; width: 126px; font: 5px/14.400px "Lato", "Noto Sans CJK SC"; border-top: 1px solid #111; border-bottom: 1px solid #111; }
    .goals > div { display: grid; grid-template-columns: 45px 27px 27px 27px; text-align: center; height: 14.400px; }
    .goals i { font-style: normal; }
    .goals .gh { background: #70ad47; color: #fff; font-weight: 700; border-bottom: 2px solid #444; }
    .goals > div:nth-child(even) { background: #e7e7e7; }
    .goals .p { color: #f00; font-weight: 700; }
    .goals .y i { background: #ff0; }
    .bul { padding: 3px 0 0 19px; font: 7.300px/14px "Noto Sans CJK SC"; color: #000; }
    .bul b { color: #f00; }
    .scores { position: relative; margin: 3px 0 0 30px; width: 142px; font: 4.800px/7px "Liberation Sans", "Noto Sans CJK SC"; border: solid #777; border-width: .500px 0 0 .500px; }
    .scores > div { display: grid; grid-template-columns: 23px 28px 23px 23px 23px 22px; text-align: center; color: #222; }
    .scores > div > span { border: solid #777; border-width: 0 1px 1px 0; height: 7.800px; overflow: visible; }
    .scores > div:first-child > span { font-size: 4.300px; }
    .scores .yy { background: #ff0; }
    .cover { position: absolute; left: 2px; top: 10px; width: 21px; height: 38px; background: #5b9bd5; border: 1px solid #2f75b5; }

    .edit { display: flex; flex-direction: column; width: 1540px; border-right: 1px solid #c4c7cd; }
    .stagerow { display: flex; height: 835px; flex: none; border-bottom: 1px solid #c9cac8; }
    .stage { width: 1524px; padding: 11px 0 0 81px; }
    .aibtn { display: flex; width: 27px; height: 27px; margin: 0 0 7px 1px; align-items: center; justify-content: center; border-radius: 4px; background: #fff; box-shadow: 0 0 2px #a9abb5; }
    .holder { position: relative; width: 1360px; height: 765px; background: #fff; box-shadow: 0 0 0 1px #c8cacd, 1px 2px 4px rgba(90, 90, 100, .35); }
    .vbar { display: flex; flex-direction: column; align-items: center; width: 15px; padding: 6px 0 0 0; }
    .vthumb { width: 8px; height: 48px; flex: none; border-radius: 4px; background: #cbcdd2; margin: 106px 0 622px; }
    .vbar .ic + .ic { margin-top: 11px; }
    .vbar .ic:last-child { margin-top: 7px; }
    .noteline { padding: 8px 0 0 12px; color: #85857f; height: 32px; }

    .slide { width: 1360px; height: 766px; color: #000; font-family: "Noto Sans CJK SC", sans-serif; }
    .title { height: 74px; padding-left: 25px; font-size: 51px; line-height: 88px; color: #000; display: flex; }
    .title .lat { width: 38px; font-size: 45px; }
    .lat { font-family: "Lato", sans-serif; font-size: .9em; }
    .grid { width: 1197px; margin-left: 112px; border-left: 1px solid #ccc; border-right: 1px solid #ccc; position: relative; }
    .tr { display: grid; grid-template-columns: 304px 305px 586px; }
    .td { display: flex; flex-direction: column; align-items: center; justify-content: center; text-align: center; font-size: 28.400px; line-height: 51px; }
    .td + .td { border-left: 1px solid #fff; }
    .hd { height: 54px; background: #ed7d31; color: #fff; font-weight: 700; border-top: 3px solid #000; border-bottom: 3px solid #000; margin-left: -1px; margin-right: -1px; grid-template-columns: 305px 305px 587px; }
    .holder .hd { border-top-style: double; border-top-color: #222; }
    .hd .td { line-height: 46px; padding: 0 0 2px 0; }
    .body { height: 161.500px; }
    .body.gray .td { padding-bottom: 4px; }
    .body.white .td { padding-bottom: 1px; }
    .body.gray .names, .body.gray .low { padding: 9px 0 0; }
    .body.white .names, .body.white .low { padding-top: 9px; }
    .gray { background: #e7e7e7; border-bottom: 1px solid #fff; }
    .white { height: 164px; }
    .third { height: 162px; }
    .rest { height: 147px; }
    .endline { height: 4px; border: solid #222; border-width: 2px 0 1px; background: #bbb; }
    .k { color: #000; } .b { color: #2e75b6; } .r { color: #f00; } .blue { color: #0070c0; }
    .strong { font-weight: 700; }
    .mark { background: #ff0; }
    .mini { width: 1360px; transform: scale(.1801); transform-origin: 0 0; }
    .mini .hd { border-top-width: 5px; border-bottom-width: 5px; }
    .mini .grid { border-color: transparent; }
    .mini .endline { display: none; }
    .hrow { position: absolute; left: 112px; width: 1197px; height: 12px; }
    .hrow.t { top: 70px; }
    .hrow.bt { top: 759px; }
    .h { position: absolute; top: 0; width: 12px; height: 12px; border-radius: 50%; background: #fff; border: 1.200px solid #777; }
    .h.l { left: -6px; } .h.c { left: 593px; } .h.rr { right: -6px; }
    .float { position: absolute; left: 1325px; top: 223px; width: 28px; height: 28px; display: flex; align-items: center; justify-content: center; background: #fff; border: 1px solid #c8c8c8; border-radius: 5px; }

    .side { position: relative; width: 56px; display: flex; flex-direction: column; align-items: center; padding-top: 24px; }
    .dashw { height: 22px; flex: none; }
    .s { display: flex; flex-direction: column; align-items: center; height: 52px; flex: none; }
    .s > div { height: 16px; display: flex; align-items: center; margin-bottom: 3px; }
    .th-meter { position: absolute; right: 0; top: 808px; }

    /* status bar */
    .status { display: flex; height: 24px; flex: none; align-items: center; border-top: 1px solid #cbcbc6; padding-left: 13px; }
    .st-l { display: grid; align-items: center; grid-template-columns: 82px 16px 19px 76px 17px 18px 40px; }
    .st-r { display: grid; align-items: center; margin-left: auto; width: 697px;
      grid-template-columns: 18px 52px 23px 16px 18px 28px 29px 19px 38px 9px 37px 32px 27px 11px 28px 20px 15px 34px 42px 25px 26px 121px 29px; }
    .status .vs { height: 16px; }
    .on24 { display: flex; width: 24px; height: 24px; align-items: center; justify-content: center; background: #d0d1d6; border-radius: 3px; }
    .playb { display: flex; width: 20px; height: 18px; align-items: center; justify-content: center; background: #e4661b; border-radius: 2px; }
    .slider { position: relative; width: 106px; height: 2px; background: linear-gradient(90deg, #1f5fcc 50%, #aaacb0 50%); }
    .slider i { position: absolute; left: 48px; top: -4px; width: 10px; height: 10px; border-radius: 50%; background: #888; border: 3px solid #fff; box-shadow: 0 0 2px #666; }

    /* task bar */
    .task { display: flex; height: 40px; flex: none; background: linear-gradient(90deg, #eedcc6 0, #ece5d2 14%, #e6e5cb 27%, #dfe3cc 34%, #e3e1ce 48%, #e7d8cf 61%, #e3dde6 67%, #dfe3ec 77%, #d3e3e8 88%, #cfe1e4 100%); }
    .start { display: flex; width: 49px; align-items: center; padding-left: 16px; }
    .find { display: flex; align-items: center; gap: 11px; width: 287px; background: #fff; border: 1px solid #c2c0b8; padding-left: 10px; font-size: 14px; color: #222; }
    .apps { display: grid; grid-template-columns: 55px 49px 49px 45px 53px 49px 40px; }
    .a { display: flex; width: 40px; height: 40px; align-items: center; justify-content: center; border-bottom: 2px solid transparent; }
    .tv { width: 32px; padding: 2px 0 0 16px; justify-content: flex-start; margin-left: 0; }
    .run { border-color: #0078d7; }
    .wpsrun { width: 46px; background: #f3f2ea; }
    .wpsrun .ic { width: 25px; height: 20px; }
    .tray { display: grid; align-items: center; margin-left: auto; width: 544px; grid-template-columns: 38px 32px 260px 22px 24px 23px 28px 75px 37px 5px; }
    .clock { width: 56px; text-align: center; line-height: 19px; color: #111; }
    .cn { font-size: 15.500px; color: #111; }
    .edge { height: 40px; width: 1px; background: #9fb0b4; }
  `;

  private lat(s: string) {
    return s.split(/([A-Za-z0-9.]+)/).map((p) => (/^[A-Za-z0-9.]+$/.test(p) ? html`<span class="lat">${p}</span>` : p));
  }

  private slide() {
    const rows: [string, string, string, string][] = [
      ["入口", "闫娅淇", "blue", "gray"],
      ["3月质量检测", "无", "r", "white"],
      ["期中考试", "无", "r", "gray third"],
    ];
    return html`<div class="slide">
      <div class="title"><span class="lat">1.</span>总体成绩分析（年级）</div>
      <div class="grid">
        <div class="tr hd">
          ${["考试名称", "特A线（级部前50名）", "A线（级部前288名）"].map((t) => html`<div class="td"><div>${this.lat(t)}</div></div>`)}
        </div>
        ${rows.map(([a, b, c, k], i) => html`<div class="tr body ${k}">
          <div class="td strong ${c}"><div>${this.lat(a)}</div></div>
          <div class="td ${i ? "low" : ""}"><div>${b}</div></div>
          <div class="td names">${NAMES[i].map((l) => html`<div>${l.map(([cl, t]) => html`<span class=${cl}>${t}</span>`)}</div>`)}</div>
        </div>`)}
        <div class="rest"></div>
        <div class="endline"></div>
      </div>
    </div>`;
  }

  private thumb(n: number) {
    switch (n) {
      case 1:
        return html`<div class="school">${ic("school")}<span>淄博市临淄中学</span></div>
          <div class="band">高二上学期第一次主题班会</div><div class="date">2025.08.31</div>`;
      case 2:
        return html`<div class="sect">一、期末统考成绩分析</div>`;
      case 3:
        return html`<div class="t3title"><span class="lat">1.</span>总体成绩分析（年级）</div>
          <div class="goals"><div class="gh"><span>考试</span><span>特A线</span><span>A线</span><span>B线</span></div>
          ${GOALS.map((r) => html`<div>${r.map((c, i) => html`<span class=${classMap({ p: i > 0, y: c.endsWith("*") })}><i>${c.replace("*", "")}</i></span>`)}</div>`)}</div>`;
      case 4:
        return html`<div class="mini">${this.slide()}</div>`;
      default:
        return html`<div class="t3title"><span class="lat">2.</span>分析成绩，明确方向</div>
          <div class="bul">• (1) <b>语数外必须重视</b></div>
          <div class="scores"><div>${["姓名", "语数外总分", "年级名次", "语数外排名", "班级排名", "分差"].map((h) => html`<span>${h}</span>`)}</div>
          ${SCORES.map((r) => html`<div>${r.map((c, i) => html`<span class=${classMap({ yy: i === 5 && c.startsWith("-") })}>${c}</span>`)}</div>`)}
          <i class="cover"></i></div>`;
    }
  }

  render() {
    return html`<div class="app">
      <div class="tabs">
        <div class="tab t1">${ic("wps")}<span>WPS Office</span></div>
        <div class="tab t2">${ic("docer")}<span>找稻壳模板</span></div>
        <div class="tab t3">${ic("ppt")}<span class="docname">2024级8班高一下期末考试成绩</span>${ic("monitor")}${ic("dot", "dotgap")}</div>
        <div class="tab t4">${ic("xls")}<span>8班高一下期末总分学生成绩.xlsx</span></div>
        <div class="newtab">${ic("plus")}${ic("caret")}</div>
        <div class="win">${ic("pages")}${ic("cube")}${ic("avatar")}<span class="login">立即登录</span>${ic("winMin")}${ic("winRestore")}${ic("winClose")}</div>
      </div>

      <div class="menu">
        <div class="quick">${ic("burger")}<span>文件</span><i class="vs"></i>${ic("save")}${ic("exportPdf")}${ic("print")}${ic("preview")}${ic("undo")}${ic("caret")}${ic("redo")}${ic("chevDown")}<i class="vs"></i></div>
        <div class="menus">
          <span class="m on">开始</span>
          ${["插入", "设计", "切换", "动画", "放映", "审阅", "视图", "工具", "会员专享"].map((t) => html`<span class="m">${t}</span>`)}
          <i class="vs"></i><span class="m hot">表格工具</span><span class="m hot">表格样式</span><i class="vs"></i>
          ${ic("ai")}<span class="wpsai">WPS AI</span><i class="vs"></i>${ic("search")}
        </div>
        <div class="mright">${ic("cloud")}<div class="share">${ic("share")}分享</div></div>
      </div>

      <div class="ribbon">
        <div class="g g1">${big("brush", "格式刷", false)}${big("paste", "粘贴")}
          <div class="two"><div class="cell">${ic("cut")}</div><div class="cell">${ic("copy")}</div></div>${ic("launcher", "launch")}</div>
        <div class="g g2">${big("playRound", "当页开始")}</div>
        <div class="g g3">${big("newSlide", "新建幻灯片")}${big("aiSlide", "AI 生成单页", false)}${big("layout", "版式")}
          <div class="two">${btn("reset", "重置", false)}${btn("section", "节")}</div></div>
        <div class="g g4">
          <div class="row r41"><div class="combo"><div><span></span>${ic("chevDownLight")}</div><div><span>20</span>${ic("chevDownLight")}</div></div>${ic("aPlus")}${ic("aMinus")}${ic("eraser")}</div>
          <div class="row r42"><span class="fmt bold">B</span>${ic("italic")}${ic("underline")}${ic("strikeA")}<span class="fmt sh">S</span><span class="fmt sup">X<small>2</small></span>${ic("caret")}${ic("fontColor")}${ic("caret")}${ic("marker")}${ic("caret")}<span class="wen"><span>wén</span><b>文</b></span>${ic("caret")}</div>
          ${ic("launcher", "launch")}</div>
        <div class="g g5">
          <div class="row r51">${ic("bullets")}${ic("caret")}${ic("numbers")}${ic("caret")}${ic("outdent")}${ic("indent")}<i class="vs"></i><span class="ab">ab</span>${ic("caret")}${ic("textDir")}${ic("caret")}${ic("convert")}</div>
          <div class="row r52">${ic("alL")}<span class="onbtn">${ic("alC")}</span>${ic("alR")}${ic("alJ")}${ic("dist")}${ic("lineInc")}${ic("lineDec")}${ic("lineSp")}${ic("caret")}${ic("vAlign")}${ic("caret")}</div>
          ${ic("launcher", "launch")}</div>
        <div class="g g6">
          <div class="row r6">${btn("shapes", "形状")}${btn("picture", "图片")}${btn("fill", "")}</div>
          <div class="row r6">${btn("textbox", "文本框")}${btn("arrange", "排列")}<div class="btn">${ic("outline")}${ic("caretGray")}</div></div>
          ${ic("launcher", "launch")}</div>
        <div class="g g7 last">${btn("search", "查找")}${btn("select", "选择")}</div>
      </div>

      <div class="work">
        <div class="nav">
          <div class="navhead"><span>大纲</span><span class="sel">幻灯片</span>${ic("chevLeft")}</div>
          <div class="navbody">
            <div class="film">
              ${[1, 2, 3, 4, 5].map((n) => html`<div class="frow">
                <div class="num ${n === 4 ? "cur" : ""}"><span>${n}</span>${n === 3 ? ic("star") : nothing}</div>
                <div class="th ${n === 4 ? "cur" : ""}">${this.thumb(n)}</div></div>`)}
            </div>
            <div class="thumbbar"></div>
          </div>
          <div class="addslide">${ic("plus")}</div>
        </div>
        <div class="edit">
          <div class="stagerow">
            <div class="stage">
              <div class="aibtn">${ic("ai")}</div>
              <div class="holder">${this.slide()}
                ${["t", "bt"].map((v) => html`<div class="hrow ${v}">${["l", "c", "rr"].map((x) => html`<i class="h ${x}"></i>`)}</div>`)}
                <div class="float">${ic("tableMove")}</div>
              </div>
            </div>
            <div class="vbar">${ic("triUp")}<div class="vthumb"></div>${ic("triDown")}${ic("dblUp")}${ic("dblDown")}</div>
          </div>
          <div class="noteline">单击此处添加备注</div>
        </div>
        <div class="side"><div class="dashw">${ic("dash")}</div>
          ${SIDE.map(([i, t]) => html`<div class="s"><div>${ic(i)}</div><span>${t}</span></div>`)}
          <div class="th-meter">${ic("thermo")}</div></div>
      </div>

      <div class="status">
        <div class="st-l"><span>幻灯片 4 / 23</span><i class="vs"></i>${ic("shirt")}<span>Office 主题</span><i class="vs"></i>${ic("check")}<span>校对</span></div>
        <div class="st-r">${ic("smart")}<span>智能美化</span>${ic("caret")}<i class="vs"></i>${ic("notes")}<span>备注</span>${ic("caret")}${ic("addNote")}<span>批注</span><i class="vs"></i>
          <span class="on24">${ic("viewNormal")}</span>${ic("viewGrid")}${ic("viewBook")}<i class="vs"></i><span class="playb">${ic("play")}</span>${ic("caret")}<i class="vs"></i>
          ${ic("fit")}<span>106%</span>${ic("caret")}${ic("minusSm")}<div class="slider"><i></i></div>${ic("plusSm")}</div>
      </div>

      <div class="task">
        <div class="start">${ic("windows")}</div>
        <div class="find">${ic("searchTb")}<span>搜索</span></div>
        <div class="apps">
          <div class="a tv">${ic("taskview")}</div><div class="a">${ic("edge")}</div><div class="a run">${ic("folder")}</div><div class="a">${ic("outlook")}</div>
          <div class="a run wpsrun">${ic("wps")}</div><div class="a run">${ic("ieGreen")}</div><div class="a run">${ic("qq")}</div>
        </div>
        <div class="tray">${ic("helpTray")}${ic("calendar")}<span>星期五</span>${ic("trayUp")}${ic("shield")}${ic("ime")}<span class="cn">中</span>
          <div class="clock">13:51<br />2025/8/29</div>${ic("notif")}<i class="edge"></i></div>
      </div>
    </div>`;
  }
}
